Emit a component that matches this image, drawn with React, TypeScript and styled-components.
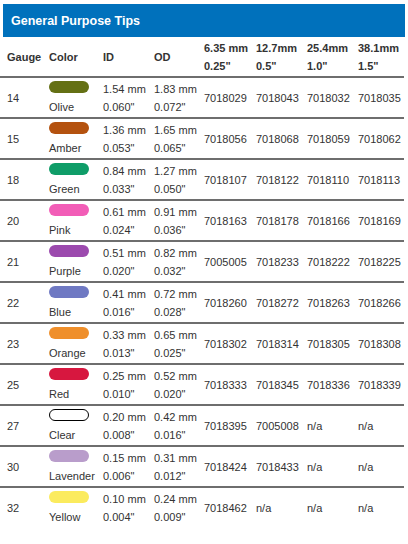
import styled, { createGlobalStyle } from "styled-components";

const GlobalStyle = createGlobalStyle`
  body {
    margin: 0;
    background: #fff;
    font-family: "Liberation Sans", Arial, sans-serif;
    color: #333;
  }
`;

// Barra azul do título
const TitleBar = styled.div`
  margin: 4px 3px 0 3px;
  height: 33px;
  background: #0071bc;
  color: #fff;
  font-weight: bold;
  font-size: 12.5px;
  display: flex;
  align-items: center;
  padding-left: 8px;
`;

const Table = styled.div`
  width: 404px;
`;

// Colunas da tabela
const Row = styled.div<{ $head?: boolean; $last?: boolean }>`
  display: grid;
  grid-template-columns: 42px 54px 51px 50px 52px 51px 51px 1fr;
  align-items: center;
  height: 39px;
  padding-left: 5px;
  border-bottom: ${p => (p.$last ? "none" : "2px solid #6e6e6e")};
  font-size: 11px;
  line-height: 18px;
  font-weight: ${p => (p.$head ? "bold" : "normal")};
`;

const Cell = styled.div`
  padding-left: 2px;
  white-space: nowrap;
`;

const Pill = styled.div<{ $color: string; $outline?: boolean }>`
  width: ${p => (p.$outline ? "38px" : "40px")};
  height: ${p => (p.$outline ? "10px" : "12px")};
  margin: 1px 0 5px;
  border-radius: 7px;
  background: ${p => p.$color};
  border: ${p => (p.$outline ? "1px solid #000" : "none")};
`;

interface Tip {
  gauge: number;
  color: string;
  hex: string;
  idMm: string;
  idIn: string;
  odMm: string;
  odIn: string;
  parts: string[];
}

const tips: Tip[] = [
  { gauge: 14, color: "Olive", hex: "#647014", idMm: "1.54 mm", idIn: '0.060"', odMm: "1.83 mm", odIn: '0.072"', parts: ["7018029", "7018043", "7018032", "7018035"] },
  { gauge: 15, color: "Amber", hex: "#b4520f", idMm: "1.36 mm", idIn: '0.053"', odMm: "1.65 mm", odIn: '0.065"', parts: ["7018056", "7018068", "7018059", "7018062"] },
  { gauge: 18, color: "Green", hex: "#0f9d68", idMm: "0.84 mm", idIn: '0.033"', odMm: "1.27 mm", odIn: '0.050"', parts: ["7018107", "7018122", "7018110", "7018113"] },
  { gauge: 20, color: "Pink", hex: "#f25db7", idMm: "0.61 mm", idIn: '0.024"', odMm: "0.91 mm", odIn: '0.036"', parts: ["7018163", "7018178", "7018166", "7018169"] },
  { gauge: 21, color: "Purple", hex: "#9c4aae", idMm: "0.51 mm", idIn: '0.020"', odMm: "0.82 mm", odIn: '0.032"', parts: ["7005005", "7018233", "7018222", "7018225"] },
  { gauge: 22, color: "Blue", hex: "#6f79c3", idMm: "0.41 mm", idIn: '0.016"', odMm: "0.72 mm", odIn: '0.028"', parts: ["7018260", "7018272", "7018263", "7018266"] },
  { gauge: 23, color: "Orange", hex: "#ef8f2b", idMm: "0.33 mm", idIn: '0.013"', odMm: "0.65 mm", odIn: '0.025"', parts: ["7018302", "7018314", "7018305", "7018308"] },
  { gauge: 25, color: "Red", hex: "#d7173f", idMm: "0.25 mm", idIn: '0.010"', odMm: "0.52 mm", odIn: '0.020"', parts: ["7018333", "7018345", "7018336", "7018339"] },
  { gauge: 27, color: "Clear", hex: "#ffffff", idMm: "0.20 mm", idIn: '0.008"', odMm: "0.42 mm", odIn: '0.016"', parts: ["7018395", "7005008", "n/a", "n/a"] },
  { gauge: 30, color: "Lavender", hex: "#b99dcb", idMm: "0.15 mm", idIn: '0.006"', odMm: "0.31 mm", odIn: '0.012"', parts: ["7018424", "7018433", "n/a", "n/a"] },
  { gauge: 32, color: "Yellow", hex: "#fbeb5e", idMm: "0.10 mm", idIn: '0.004"', odMm: "0.24 mm", odIn: '0.009"', parts: ["7018462", "n/a", "n/a", "n/a"] },
];

const sizes = [
  ["6.35 mm", '0.25"'],
  ["12.7mm", '0.5"'],
  ["25.4mm", '1.0"'],
  ["38.1mm", '1.5"'],
];

function App() {
  return (
    <>
      <GlobalStyle />
      <TitleBar>General Purpose Tips</TitleBar>
      <Table>
        <Row $head>
          <Cell>Gauge</Cell>
          <Cell>Color</Cell>
          <Cell>ID</Cell>
          <Cell>OD</Cell>
          {sizes.map(s => (
            <Cell key={s[0]}>
              {s[0]}
              <br />
              {s[1]}
            </Cell>
          ))}
        </Row>
        {tips.map((t, i) => (
          <Row key={t.gauge} $last={i === tips.length - 1}>
            <Cell>{t.gauge}</Cell>
            <Cell>
              <Pill $color={t.hex} $outline={t.color === "Clear"} />
              {t.color}
            </Cell>
            <Cell>
              {t.idMm}
              <br />
              {t.idIn}
            </Cell>
            <Cell>
              {t.odMm}
              <br />
              {t.odIn}
            </Cell>
            {t.parts.map((p, j) => (
              <Cell key={j}>{p}</Cell>
            ))}
          </Row>
        ))}
      </Table>
    </>
  );
}

export default App;
